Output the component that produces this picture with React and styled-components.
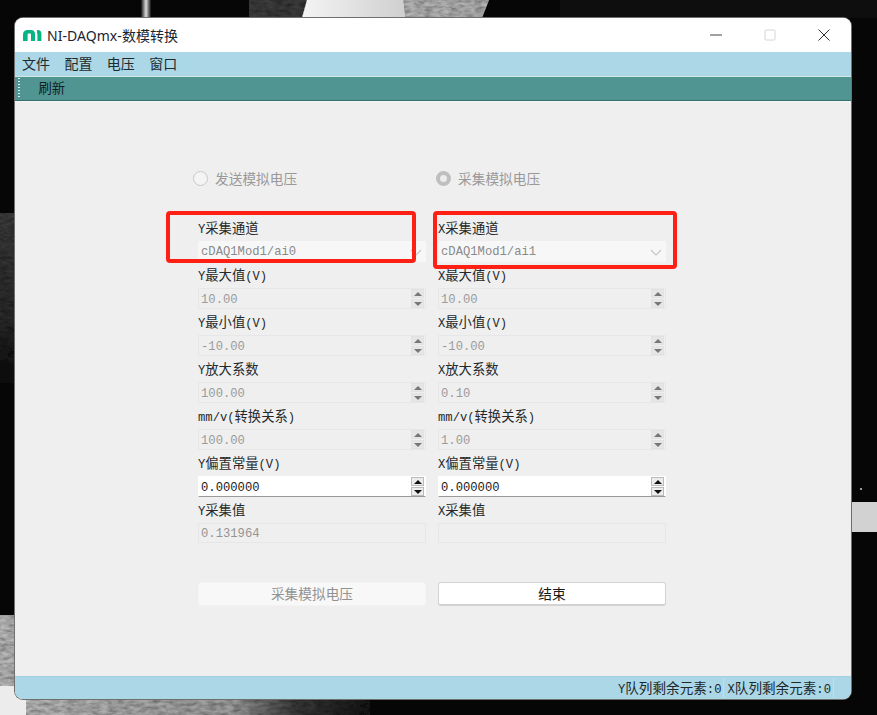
import React from 'react';
import styled, { createGlobalStyle } from 'styled-components';

const GlobalStyle = createGlobalStyle`
  html, body {
    margin: 0;
    padding: 0;
    background: #060606;
  }
  * {
    box-sizing: border-box;
  }
`;

const cjk = '"Noto Sans CJK SC", sans-serif';
const mono = '"Liberation Mono", "Noto Sans CJK SC", monospace';

const Desktop = styled.div`
  position: relative;
  width: 877px;
  height: 715px;
  padding: 18px 26px 16px 15px;
  overflow: hidden;
  background: #060606;
`;

const Wallpaper = styled.svg`
  position: absolute;
  inset: 0;
`;

const Window = styled.div`
  position: relative;
  display: flex;
  flex-direction: column;
  height: 100%;
  border-radius: 8px;
  overflow: hidden;
  background: #efefef;
  box-shadow: 0 0 0 1px #6f6f6f;
`;

const TitleBar = styled.div`
  display: flex;
  align-items: center;
  flex: 0 0 34px;
  padding-left: 8px;
  background: #fff;
  color: #1c2430;
  font: 14px "Noto Sans", ${cjk};
`;

const TitleText = styled.span`
  margin-left: 5px;
  line-height: 33px;
  letter-spacing: 0.05px;
`;

const WindowButtons = styled.div`
  display: flex;
  margin-left: auto;
`;

const WindowButton = styled.div`
  display: flex;
  align-items: center;
  justify-content: center;
  width: 54px;
  height: 34px;
`;

const MenuBar = styled.div`
  display: flex;
  flex: 0 0 24px;
  align-items: center;
  gap: 14.4px;
  padding: 0 0 2px 7px;
  background: #abd7e6;
  color: #1e2a2e;
  font: 14px ${cjk};
`;

const ToolBar = styled.div`
  display: flex;
  align-items: center;
  flex: 0 0 26px;
  padding: 0 0 3px 3px;
  background: #519593;
  border-top: 1px solid #d4e6e8;
  border-bottom: 1px solid #f5f5f5;
  box-shadow: inset 0 -1px 0 #33706f;
  color: #12201f;
  font: 13.3px ${cjk};
`;

const Grip = styled.span`
  width: 2px;
  height: 20px;
  margin-right: 18.5px;
  background: repeating-linear-gradient(to bottom, #dfeeee 0 1px, transparent 1px 3px);
`;

const Content = styled.main`
  flex: 1;
  padding: 68px 0 0 178px;
`;

const RadioRow = styled.div`
  display: grid;
  grid-template-columns: 243px 243px;
  height: 16px;
`;

const Radio = styled.label`
  display: flex;
  align-items: center;
  gap: 7px;
  color: #999;
  font: 13.7px/16px ${cjk};
`;

const RadioDot = styled.span`
  width: 15px;
  height: 15px;
  border-radius: 50%;
  border: ${(props) => (props.$on ? '4px solid #bfbfbf' : '1px solid #c9c9c9')};
  background: ${(props) => (props.$on ? '#ececec' : '#f4f4f4')};
`;

const FormGrid = styled.div`
  display: grid;
  grid-template-columns: 228px 228px;
  column-gap: 12px;
  margin: 29px 0 0 5px;
`;

const Field = styled.div`
  display: flex;
  flex-direction: column;
  height: 47px;
`;

const Label = styled.div`
  height: 26px;
  color: #26292b;
  font: 13.3px/25px ${cjk};
  white-space: nowrap;
`;

const Latin = styled.span`
  font-family: ${mono};
  font-size: 12.2px;
`;

const ComboBox = styled.div`
  display: flex;
  align-items: center;
  justify-content: space-between;
  height: 21px;
  padding: 1px 4px 0 3px;
  background: #f7f7f7;
  color: #8a8a8a;
  font: 12.2px ${mono};
`;

const SpinBox = styled.div`
  display: flex;
  align-items: center;
  justify-content: space-between;
  height: 21px;
  padding: 0 1px 0 2px;
  background: ${(props) => (props.$active ? '#fff' : '#efefef')};
  border: 1px solid ${(props) => (props.$active ? '#fff' : '#e7e7e7')};
  border-bottom-color: ${(props) => (props.$active ? '#9a9a9a' : '#e7e7e7')};
  color: ${(props) => (props.$active ? '#222' : '#9b9b9b')};
  font: 12.2px ${mono};
`;

const SpinValue = styled.span`
  position: relative;
  top: ${(props) => (props.$active ? '1.5px' : '1px')};
`;

const SpinButtons = styled.div`
  display: flex;
  flex-direction: column;
  gap: 1px;
  width: 13px;
`;

const SpinButton = styled.div`
  display: flex;
  align-items: center;
  justify-content: center;
  height: 9px;
  background: ${(props) => (props.$active ? '#ececec' : '#e6e6e6')};
  outline: 1px solid ${(props) => (props.$active ? '#bbb' : '#e2e2e2')};
  outline-offset: -1px;

  &::after {
    content: '';
    border-left: 4px solid transparent;
    border-right: 4px solid transparent;
    border-${(props) => (props.$down ? 'top' : 'bottom')}: 4px solid
      ${(props) => (props.$active ? '#111' : '#777')};
  }
`;

const LineEdit = styled.div`
  height: 20px;
  padding: 1px 0 0 2px;
  background: #efefef;
  border: 1px solid #e6e6e6;
  color: #949494;
  font: 12.2px/18px ${mono};
`;

const ButtonRow = styled.div`
  display: grid;
  grid-template-columns: 228px 228px;
  column-gap: 12px;
  margin: 38px 0 0 5px;
`;

const Button = styled.button`
  height: 24px;
  padding: 0 0 2px;
  border-radius: 3px;
  border: 1px solid ${(props) => (props.disabled ? '#f4f4f4' : '#d2d2d2')};
  border-bottom-width: ${(props) => (props.disabled ? '1px' : '2px')};
  background: ${(props) => (props.disabled ? '#f8f8f8' : '#fff')};
  color: ${(props) => (props.disabled ? '#929292' : '#1a1a1a')};
  font: 13.7px ${cjk};
`;

const StatusBar = styled.div`
  display: flex;
  justify-content: flex-end;
  align-items: center;
  flex: 0 0 23px;
  gap: 3px;
  padding-right: 17px;
  background: #abd7e6;
  border-top: 1px solid #a3d0df;
`;

const StatusCell = styled.span`
  height: 20px;
  padding-right: 2px;
  border-right: 1px solid #c0dfe9;
  color: #20282b;
  font: 13.6px/19px ${cjk};
  white-space: nowrap;
`;

const RedBox = styled.div`
  position: absolute;
  left: ${(props) => props.$x}px;
  top: 211px;
  width: ${(props) => props.$w}px;
  height: ${(props) => props.$h}px;
  border: 4.5px solid #ff2015;
  border-radius: 4px;
`;

const Mixed = ({ text }) => (
  <>
    {text.split(/([\x00-\x7f]+)/).map((part, i) =>
      /^[\x00-\x7f]+$/.test(part) ? <Latin key={i}>{part}</Latin> : part
    )}
  </>
);

const Spin = ({ value, active }) => (
  <SpinBox $active={active}>
    <SpinValue $active={active}>{value}</SpinValue>
    <SpinButtons>
      <SpinButton $active={active} />
      <SpinButton $active={active} $down />
    </SpinButtons>
  </SpinBox>
);

const Chevron = () => (
  <svg width="12" height="7" viewBox="0 0 12 7" fill="none" stroke="#c4c4c4" strokeWidth="1.1">
    <path d="M1 1l5 5 5-5" />
  </svg>
);

const NiLogo = () => (
  <svg width="19" height="11" viewBox="0 0 19 11" fill="#03b585">
    <path d="M0 11V4.5C0 1.5 2 0 4.5 0H8C10.5 0 12 1.5 12 4V11H8V4.6C8 3.9 7.5 3.6 7 3.6H5.5C5 3.6 4.6 4 4.6 4.6V11z" />
    <path d="M14 0h1C17 0 18.4 1.3 18.4 3.2V11h-4V3.4h-.4z" />
  </svg>
);

const columns = [
  {
    axis: 'Y',
    combo: 'cDAQ1Mod1/ai0',
    max: '10.00',
    min: '-10.00',
    gain: '100.00',
    ratio: '100.00',
    value: '0.131964',
  },
  {
    axis: 'X',
    combo: 'cDAQ1Mod1/ai1',
    max: '10.00',
    min: '-10.00',
    gain: '0.10',
    ratio: '1.00',
    value: '',
  },
];

const Column = ({ axis, combo, max, min, gain, ratio, value }) => (
  <div>
    <Field>
      <Label><Mixed text={`${axis}采集通道`} /></Label>
      <ComboBox>
        {combo}
        <Chevron />
      </ComboBox>
    </Field>
    <Field>
      <Label><Mixed text={`${axis}最大值(V)`} /></Label>
      <Spin value={max} />
    </Field>
    <Field>
      <Label><Mixed text={`${axis}最小值(V)`} /></Label>
      <Spin value={min} />
    </Field>
    <Field>
      <Label><Mixed text={`${axis}放大系数`} /></Label>
      <Spin value={gain} />
    </Field>
    <Field>
      <Label><Mixed text="mm/v(转换关系)" /></Label>
      <Spin value={ratio} />
    </Field>
    <Field>
      <Label><Mixed text={`${axis}偏置常量(V)`} /></Label>
      <Spin value="0.000000" active />
    </Field>
    <Field>
      <Label><Mixed text={`${axis}采集值`} /></Label>
      <LineEdit>{value}</LineEdit>
    </Field>
  </div>
);

const Backdrop = () => (
  <Wallpaper width="877" height="715" viewBox="0 0 877 715">
    <defs>
      <filter id="grain" x="0" y="0" width="100%" height="100%">
        <feTurbulence type="fractalNoise" baseFrequency="0.12 0.3" numOctaves="3" seed="4" />
        <feColorMatrix values="1 0 0 0 0.25  1 0 0 0 0.25  1 0 0 0 0.25  0 0 0 0 1" />
        <feBlend in2="SourceGraphic" mode="multiply" />
        <feComposite in2="SourceAlpha" operator="in" />
      </filter>
      <linearGradient id="sheen" x1="0" y1="0" x2="1" y2="0">
        <stop offset="0" stopColor="#f4f4f4" />
        <stop offset="1" stopColor="#cfcfcf" />
      </linearGradient>
      <linearGradient id="streak" x1="0" y1="0" x2="1" y2="0">
        <stop offset="0" stopColor="#111" />
        <stop offset="0.5" stopColor="#ddd" />
        <stop offset="1" stopColor="#111" />
      </linearGradient>
      <linearGradient id="fade" x1="0" y1="0" x2="1" y2="0">
        <stop offset="0" stopColor="#b8b8b8" />
        <stop offset="0.6" stopColor="#9c9c9c" />
        <stop offset="0.78" stopColor="#3a3a3a" />
        <stop offset="1" stopColor="#141414" />
      </linearGradient>
      <linearGradient id="dim" x1="0" y1="0" x2="0" y2="1">
        <stop offset="0" stopColor="#3c3c3c" />
        <stop offset="0.6" stopColor="#2a2a2a" />
        <stop offset="1" stopColor="#0a0a0a" />
      </linearGradient>
    </defs>
    <rect x="560" y="0" width="317" height="18" fill="#0e0e0e" />
    <rect x="141" y="0" width="10" height="18" fill="url(#streak)" />
    <polygon points="249,0 307,0 302,18 249,18" fill="#3c3c3c" filter="url(#grain)" />
    <polygon points="307,0 405,0 405,18 302,18" fill="url(#sheen)" />
    <polygon points="403,0 489,0 482,18 405,18" fill="#b4b4b4" filter="url(#grain)" />
    <rect x="0" y="213" width="15" height="170" fill="url(#dim)" filter="url(#grain)" />
    <rect x="0" y="615" width="15" height="71" fill="#b8b8b8" filter="url(#grain)" />
    <rect x="0" y="686" width="26" height="29" fill="#ececec" />
    <rect x="26" y="699" width="344" height="16" fill="url(#fade)" filter="url(#grain)" />
    <rect x="852" y="502" width="25" height="30" fill="#d2d2d2" />
    <rect x="860" y="488" width="2" height="2" fill="#9a9a9a" />
  </Wallpaper>
);

export default function App() {
  return (
    <Desktop>
      <GlobalStyle />
      <Backdrop />
      <Window>
        <TitleBar>
          <NiLogo />
          <TitleText>NI-DAQmx-数模转换</TitleText>
          <WindowButtons>
            <WindowButton>
              <svg width="12" height="2" viewBox="0 0 12 2"><path d="M0 1h12" stroke="#444" /></svg>
            </WindowButton>
            <WindowButton>
              <svg width="12" height="12" viewBox="0 0 12 12">
                <rect x="1" y="1" width="10" height="10" rx="1" fill="none" stroke="#d4d4d4" />
              </svg>
            </WindowButton>
            <WindowButton>
              <svg width="12" height="12" viewBox="0 0 12 12">
                <path d="M.5.5l11 11M11.5.5l-11 11" stroke="#333" />
              </svg>
            </WindowButton>
          </WindowButtons>
        </TitleBar>
        <MenuBar>
          <span>文件</span>
          <span>配置</span>
          <span>电压</span>
          <span>窗口</span>
        </MenuBar>
        <ToolBar>
          <Grip />
          <span>刷新</span>
        </ToolBar>
        <Content>
          <RadioRow>
            <Radio><RadioDot />发送模拟电压</Radio>
            <Radio><RadioDot $on />采集模拟电压</Radio>
          </RadioRow>
          <FormGrid>
            {columns.map((col) => (
              <Column key={col.axis} {...col} />
            ))}
          </FormGrid>
          <ButtonRow>
            <Button disabled>采集模拟电压</Button>
            <Button>结束</Button>
          </ButtonRow>
        </Content>
        <StatusBar>
          <StatusCell><Mixed text="Y队列剩余元素:0" /></StatusCell>
          <StatusCell><Mixed text="X队列剩余元素:0" /></StatusCell>
        </StatusBar>
      </Window>
      <RedBox $x={166} $w={250} $h={52} />
      <RedBox $x={433} $w={244} $h={58} />
    </Desktop>
  );
}
